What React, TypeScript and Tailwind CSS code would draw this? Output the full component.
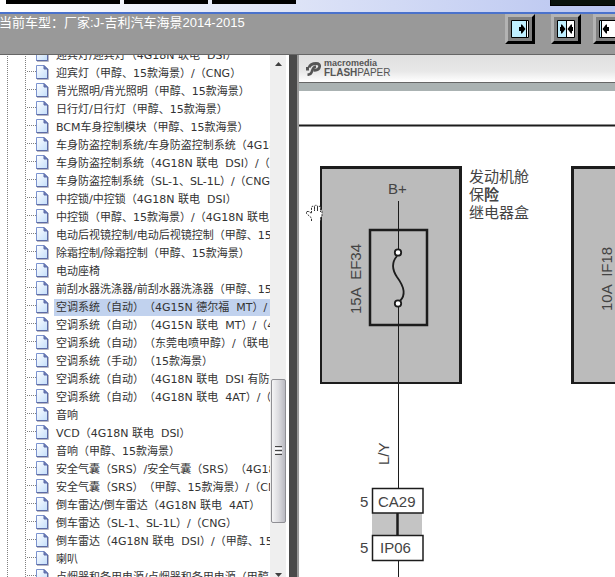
import {ReactNode} from "react";

const SELECTED = 14;

const items = [
    "迎宾灯/迎宾灯（4G18N 联电  DSI）",
    "迎宾灯（甲醇、15款海景）/（CNG）",
    "背光照明/背光照明（甲醇、15款海景）",
    "日行灯/日行灯（甲醇、15款海景）",
    "BCM车身控制模块（甲醇、15款海景）",
    "车身防盗控制系统/车身防盗控制系统（4G18N 联电  DSI）",
    "车身防盗控制系统（4G18N 联电  DSI）/（甲醇、15款海景）",
    "车身防盗控制系统（SL-1、SL-1L）/（CNG）",
    "中控锁/中控锁（4G18N 联电  DSI）",
    "中控锁（甲醇、15款海景）/（4G18N 联电  4AT）",
    "电动后视镜控制/电动后视镜控制（甲醇、15款海景）",
    "除霜控制/除霜控制（甲醇、15款海景）",
    "电动座椅",
    "前刮水器洗涤器/前刮水器洗涤器（甲醇、15款海景）",
    "空调系统（自动）（4G15N 德尔福  MT）/（甲醇）",
    "空调系统（自动）（4G15N 联电  MT）/（4G18N）",
    "空调系统（自动）（东莞电喷甲醇）/（联电甲醇）",
    "空调系统（手动）（15款海景）",
    "空调系统（自动）（4G18N 联电  DSI 有防盗）",
    "空调系统（自动）（4G18N 联电  4AT）/（CNG）",
    "音响",
    "VCD（4G18N 联电  DSI）",
    "音响（甲醇、15款海景）",
    "安全气囊（SRS）/安全气囊（SRS）（4G18N 联电）",
    "安全气囊（SRS）（甲醇、15款海景）/（CNG）",
    "倒车雷达/倒车雷达（4G18N 联电  4AT）",
    "倒车雷达（SL-1、SL-1L）/（CNG）",
    "倒车雷达（4G18N 联电  DSI）/（甲醇、15款海景）",
    "喇叭",
    "点烟器和备用电源/点烟器和备用电源（甲醇、15款海景）",
];

function PageIcon() {
    return (
        <svg width="13" height="16" viewBox="0 0 13 16" className="shrink-0" aria-hidden="true">
            <defs>
                <linearGradient id="page" x1="0" y1="0" x2="1" y2="1">
                    <stop offset="0" stopColor="#ffffff"/>
                    <stop offset="1" stopColor="#c3defb"/>
                </linearGradient>
            </defs>
            <path d="M1 15.5H12.5V5" fill="none" stroke="#b9b9c4"/>
            <path d="M.5 1.5H8L11.5 5V14.5H.5Z" fill="url(#page)" stroke="#7b93cf"/>
            <path d="M11.5 5V14.5H.5" fill="none" stroke="#5c6ba6"/>
            <path d="M8 1.5V5H11.5Z" fill="#6d80c0" stroke="#5c6ba6"/>
        </svg>
    );
}

function TreeItem({label, selected}: { label: string, selected: boolean }) {
    return (
        <li className="flex h-[18px] items-start">
            <span className="ml-[7px] h-full w-px shrink-0 bg-[repeating-linear-gradient(#808080_0_1px,#fff_1px_2px)]"/>
            <span className="ml-[17px] h-full w-px shrink-0 bg-[repeating-linear-gradient(#808080_0_1px,#fff_1px_2px)]"/>
            <span className="mt-[7px] h-px w-[10px] shrink-0 bg-[repeating-linear-gradient(90deg,#fff_0_1px,#808080_1px_2px)]"/>
            <PageIcon/>
            <a href="#" className={`ml-[5px] mt-px h-[17px] grow whitespace-pre pl-[2px] text-[11px] leading-[17px] text-[#333] [text-spacing-trim:space-all] ${selected ? "bg-[#c1d2ee]" : ""}`}>
                {label}
            </a>
        </li>
    );
}

function Scrollbar() {
    return (
        <div className="flex w-[17px] shrink-0 flex-col items-center border-r border-white bg-[#efefef]">
            <svg width="7" height="4" className="mt-[7px]" aria-hidden="true"><path d="M0 4L3.5 0L7 4Z" fill="#404040"/></svg>
            <div className="grow-[312]"/>
            <div className="flex h-36 w-[15px] shrink-0 flex-col items-center justify-center gap-px rounded-xs border border-[#8f8f94] bg-linear-to-r from-[#f5f5f6] via-[#dcdce0] to-[#b9b9c1]">
                <span className="h-px w-[7px] bg-[#444]"/>
                <span className="h-px w-[7px] bg-white"/>
                <span className="h-px w-[7px] bg-[#444]"/>
                <span className="h-px w-[7px] bg-white"/>
                <span className="h-px w-[7px] bg-[#444]"/>
            </div>
            <div className="grow-[50]"/>
            <svg width="7" height="4" aria-hidden="true"><path d="M0 0L3.5 4L7 0Z" fill="#404040"/></svg>
        </div>
    );
}

function ToolButton({label, children}: { label: string, children: ReactNode }) {
    return (
        <button type="button" aria-label={label} className="size-[30px] shrink-0">
            <svg width="30" height="30" viewBox="0 0 30 30">
                <path d="M0 0H30V30H0Z" fill="#b3b3b3"/>
                <path d="M30 0V30H0L3 27H27V3Z" fill="#000"/>
                <path d="M3 3H27V27H3Z" fill="#808080"/>
                <path d="M6.5 6.5H23.5V23.5H6.5Z" fill="#fff"/>
                {children}
                <path d="M6.5 6.5H23.5V23.5H6.5Z" fill="none" stroke="#000"/>
            </svg>
        </button>
    );
}

function Header() {
    return (
        <header className="shrink-0">
            <div className="flex h-3 items-start bg-linear-to-r from-white via-[#e3e8f8] via-40% to-[#b9c5f0]">
                <span className="ml-[6px] h-1 w-[114px] bg-black"/>
                <span className="ml-1 h-1 w-[84px] bg-black"/>
                <span className="ml-1 h-1 w-[84px] bg-black"/>
                <span className="ml-auto h-[6px] w-[65px] border-b border-l border-black bg-[#0a120c]"/>
            </div>
            <div className="h-[2px] bg-[#4a72cc]"/>
            <div className="flex h-10 items-start bg-[#999] overflow-hidden">
                <p className="-ml-px text-[13px] leading-[17px] whitespace-nowrap text-white font-['Liberation_Sans','Noto_Sans_CJK_SC',sans-serif]">
                    当前车型：厂家:J-吉利汽车海景2014-2015
                </p>
                <div className="-mr-2 ml-auto flex">
                    <ToolButton label="展开左栏">
                        <path d="M7 7H21V23H7Z" fill="#bfefff"/>
                        <path d="M21.5 7V23" stroke="#000"/>
                        <path d="M14 13H16V10.5H17L20.5 15L17 19.5H16V17H14Z"/>
                    </ToolButton>
                    <div className="w-4"/>
                    <ToolButton label="两栏">
                        <path d="M7 7H15V23H7Z" fill="#bfefff"/>
                        <path d="M15.5 7V23" stroke="#000"/>
                        <path d="M9 13H10V10.5H11L14.5 15L11 19.5H10V17H9Z"/>
                        <path d="M22 13H21V10.5H20L16.5 15L20 19.5H21V17H22Z"/>
                    </ToolButton>
                    <div className="w-3"/>
                    <ToolButton label="展开右栏">
                        <path d="M7 7H8V23H7Z" fill="#bfefff"/>
                        <path d="M8.5 7V23" stroke="#000"/>
                        <path d="M16 13H14V10.5H13L9.5 15L13 19.5H14V17H16Z"/>
                    </ToolButton>
                </div>
            </div>
            <div className="h-px bg-[#666]"/>
        </header>
    );
}

function PaperBar() {
    return (
        <div className="shrink-0 font-['Liberation_Sans',sans-serif] text-[#555]">
            <div className="flex h-7 items-center gap-[3px] border-b border-[#666] bg-linear-to-b from-[#e0e0e0] via-[#e8e8e8] via-60% to-white pl-[7px]">
                <svg width="15" height="14" viewBox="0 0 15 14" aria-hidden="true">
                    <path d="M0 5H3V8.5H0Z" fill="#555"/>
                    <path d="M3 5.500C4 3 6.500 1.500 10 1.500C13 1.500 14 3 13.500 5C13 7.500 10.500 8.500 7.500 8.200" fill="none" stroke="#555" strokeWidth="2.800"/>
                    <path d="M10 4.500C6.500 5 6.500 8 5.500 10.500C5 12 4 12.600 1.500 12.800" fill="none" stroke="#555" strokeWidth="2.600"/>
                </svg>
                <div>
                    <p className="text-[9px] leading-[9px] font-bold">macromedia</p>
                    <p className="text-[10px] leading-[10px]"><b>FLASH</b>PAPER</p>
                </div>
            </div>
            <div className="h-2 bg-[#aab2b2]"/>
        </div>
    );
}

function Diagram() {
    return (
        <div className="min-h-0 grow overflow-hidden bg-white">
            <svg width="316" height="486" viewBox="299 91 316 486" fill="none" stroke="#1c1c1c" className="font-['Liberation_Sans','Noto_Sans_CJK_SC',sans-serif] text-[15px]">
                <path d="M299 125.500H615" strokeWidth="2"/>

                {/* engine bay fuse box */}
                <path d="M320 166H462V384H320Z" fill="#1c1c1c" stroke="none"/>
                <path d="M322 169H459V382H322Z" fill="#bbb" stroke="none"/>
                <path d="M571 166H620V384H571Z" fill="#1c1c1c" stroke="none"/>
                <path d="M574 169H620V382H574Z" fill="#bbb" stroke="none"/>

                <rect x="370" y="230" width="57" height="95" strokeWidth="2.500"/>
                <path d="M398.500 201V250M398.500 305V488M398.500 561V577"/>
                <path d="M397 256C391 263 393 271 397 277C403 285 407 294 400 301" strokeWidth="1.800"/>
                <circle cx="398" cy="252.500" r="3.200" fill="#fff" strokeWidth="1.800"/>
                <circle cx="398" cy="303.500" r="3.200" fill="#fff" strokeWidth="1.800"/>

                {/* connectors */}
                <path d="M372 513H422V536H372Z" fill="#c4c4c4" stroke="none"/>
                <path d="M397.500 513V536" strokeWidth="2.500"/>
                <path d="M372.500 488.500H423V513H372.500ZM372.500 535.500H423V560.500H372.500Z" fill="#fff" strokeWidth="1.500"/>

                <g fill="#444" stroke="none">
                    <text x="388" y="194">B+</text>
                    <text x="378" y="507">CA29</text>
                    <text x="380" y="553">IP06</text>
                    <text x="360" y="507">5</text>
                    <text x="360" y="553">5</text>
                    <text transform="translate(361 314) rotate(-90)" className="whitespace-pre">15A  EF34</text>
                    <text transform="translate(612 311) rotate(-90)" className="whitespace-pre">10A  IF18</text>
                    <text transform="translate(389 465) rotate(-90)">L/Y</text>
                    <text x="469" y="182">发动机舱</text>
                    <text x="469" y="200">保<tspan fontWeight="700">险</tspan></text>
                    <text x="469" y="218">继电器盒</text>
                </g>

                {/* grab hand */}
                <path d="M311.500 221V218L306.500 213.500V211.500H309L311.500 213.500V207L313 206L314.500 207V211V206L316 205L317.500 206V211V207L319 206L320.500 207V212V209.500L322 210V216L320.500 218V221" fill="#fff" stroke="#333" strokeDasharray="2 1"/>
            </svg>
        </div>
    );
}

export default function App() {
    return (
        <div lang="zh-CN" className="flex h-screen flex-col overflow-hidden bg-white font-['DejaVu_Sans','Noto_Sans_CJK_SC',sans-serif]">
            <Header/>
            <main className="flex min-h-0 grow">
                <nav className="w-[270px] shrink-0 overflow-hidden">
                    <ul className="-mt-[9px]">
                        {items.map((label, i) => <TreeItem key={i} label={label} selected={i === SELECTED}/>)}
                    </ul>
                </nav>
                <Scrollbar/>
                <div className="ml-[2px] w-2 shrink-0 bg-[#4a4a4a]"/>
                <section className="flex min-w-0 grow flex-col border-l-2 border-[#999]">
                    <PaperBar/>
                    <Diagram/>
                </section>
            </main>
        </div>
    );
}
